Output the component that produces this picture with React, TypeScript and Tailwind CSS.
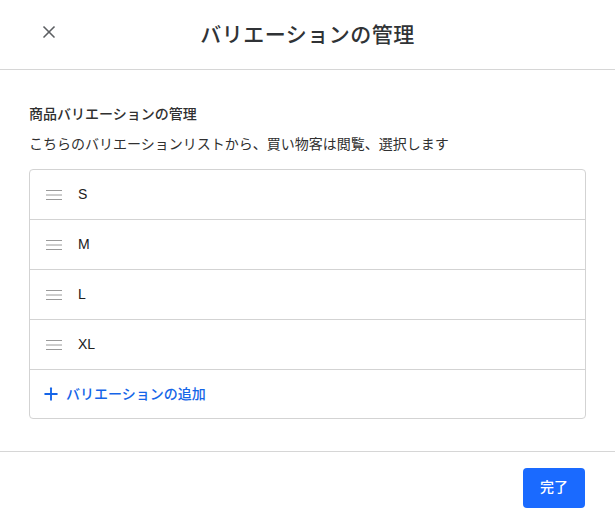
import { Plus, X } from "lucide-react"

const variations = ["S", "M", "L", "XL"]

function DragHandle() {
  return (
    <svg width="16" height="10" viewBox="0 0 16 10" className="shrink-0 text-[#9a9a9a]">
      <path d="M0 0.5H16M0 5H16M0 9.5H16" stroke="currentColor" strokeWidth="1" />
    </svg>
  )
}

export default function App() {
  return (
    <div
      className="flex h-[519px] w-[615px] flex-col bg-white text-[#303030]"
      style={{ fontFamily: '"Liberation Sans", "Noto Sans CJK JP", sans-serif' }}
    >
      <header className="relative flex h-[70px] shrink-0 items-center justify-center border-b border-[#d6d6d6]">
        <button className="absolute left-[39px] top-[22px] text-[#5c5f62]" aria-label="閉じる">
          <X size={20} strokeWidth={2} />
        </button>
        <h1 className="text-[21px] font-medium tracking-[0.5px] text-[#303336]">バリエーションの管理</h1>
      </header>

      <main className="flex-1 px-[29px] pt-[34px]">
        <h2 className="text-[14px] font-medium leading-[20px] text-[#303030]">商品バリエーションの管理</h2>
        <p className="mt-[10px] text-[14px] leading-[20px] text-[#303030]">
          こちらのバリエーションリストから、買い物客は閲覧、選択します
        </p>
        <div className="mt-[15px] overflow-hidden rounded-[4px] border border-[#d3d3d3]">
          {variations.map((v) => (
            <div key={v} className="flex h-[50px] items-center gap-[16px] border-b border-[#d3d3d3] pl-[16px]">
              <DragHandle />
              <span className="text-[14px] text-[#202020]">{v}</span>
            </div>
          ))}
          <button className="flex h-[48px] w-full items-center gap-[5px] pl-[11px] text-[14px] font-medium text-[#1565e8]">
            <Plus size={20} strokeWidth={2.25} />
            バリエーションの追加
          </button>
        </div>
      </main>

      <footer className="flex h-[68px] shrink-0 items-center justify-end border-t border-[#d6d6d6] px-[30px] pt-[4px]">
        <button className="h-[40px] w-[62px] rounded-[4px] bg-[#1a6aff] text-[14px] font-medium text-white">
          完了
        </button>
      </footer>
    </div>
  )
}
